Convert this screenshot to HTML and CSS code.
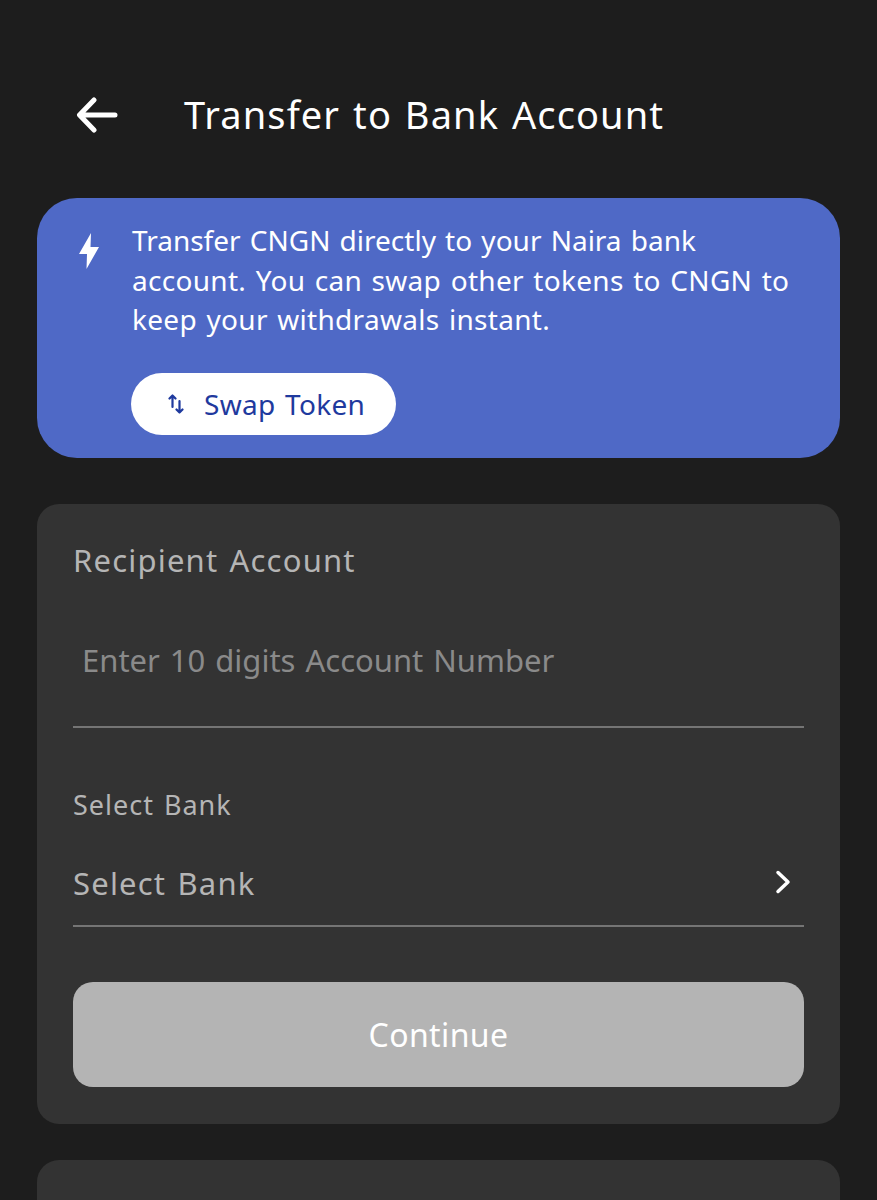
FILE: index.html
```html
<!DOCTYPE html>
<html lang="en">
<head>
    <meta charset="UTF-8">
    <meta name="viewport" content="width=device-width, initial-scale=1.0">
    <title>Transfer to Bank Account</title>
    <link rel="stylesheet" href="styles.css">
</head>
<body>
    <header class="topbar">
        <svg class="back-icon" width="42" height="36" viewBox="0 0 42 36" fill="none" stroke="#fff" stroke-width="5" stroke-linecap="round" stroke-linejoin="round">
            <path d="M39 18H4M18 3 3.500 18 18 33"/>
        </svg>
        <h1>Transfer to Bank Account</h1>
    </header>

    <section class="notice">
        <svg class="bolt-icon" width="22" height="36" viewBox="0 0 22 36" fill="#fff">
            <path d="M13 0 1 21H9L8.500 36 21 14H12.500Z"/>
        </svg>
        <div class="notice-body">
            <p><span class="tight-line">Transfer CNGN directly to your Naira bank</span><br>account. You can swap other tokens to CNGN to<br>keep your withdrawals instant.</p>
            <a class="swap-btn" href="#swap">
                <svg width="16" height="20" viewBox="0 0 16 20" fill="none" stroke="#1f3a9e" stroke-width="2.200" stroke-linecap="round" stroke-linejoin="round">
                    <path d="M4.500 13V1.500M1.500 4.500 4.500 1.500 7.500 4.500M11.500 7V18.500M8.500 15.500 11.500 18.500 14.500 15.500"/>
                </svg>
                <span>Swap Token</span>
            </a>
        </div>
    </section>

    <form class="card">
        <h2>Recipient Account</h2>
        <div class="field account-field">Enter 10 digits Account Number</div>
        <label class="small-label">Select Bank</label>
        <div class="field bank-field">
            <span>Select Bank</span>
            <svg width="18" height="24" viewBox="0 0 18 24" fill="none" stroke="#fff" stroke-width="3.500" stroke-linecap="round" stroke-linejoin="round">
                <path d="M4 2.500 14 12 4 21.500"/>
            </svg>
        </div>
        <button class="continue" type="button">Continue</button>
    </form>

    <div class="card next-card"></div>
</body>
</html>
```

FILE: styles.css
```css
html, body {
    height: 100%;
    overflow: hidden;
}
body {
    margin: 0;
    padding: 0 37px;
    background: #1d1d1d;
    color: #fff;
    font-family: "Noto Sans", sans-serif;
    word-spacing: 0.12em;
}
.topbar {
    display: flex;
    align-items: center;
    height: 198px;
    padding: 31px 0 0 39px;
    box-sizing: border-box;
}
.back-icon {
    flex: none;
}
h1 {
    margin: 0 0 2px 66px;
    font-size: 38px;
    font-weight: 400;
    letter-spacing: 1.1px;
}
.notice {
    display: flex;
    height: 260px;
    box-sizing: border-box;
    padding: 35px 0 0 41px;
    background: #4f69c6;
    border-radius: 40px;
}
.bolt-icon {
    flex: none;
}
.notice-body {
    margin-left: 31px;
}
.notice p {
    margin: -12px 0 0;
    padding-left: 1px;
    font-size: 28px;
    line-height: 39.500px;
    letter-spacing: 0.3px;
}
.tight-line {
    letter-spacing: 0;
}
.swap-btn {
    display: inline-flex;
    align-items: center;
    gap: 20px;
    height: 62px;
    margin-top: 33px;
    padding: 0 31px 0 37px;
    background: #fff;
    border-radius: 31px;
    color: #1f3a9e;
    font-size: 28px;
    letter-spacing: 0.3px;
    text-decoration: none;
}
.card {
    display: block;
    margin-top: 46px;
    padding: 34px 36px 36px;
    box-sizing: border-box;
    height: 620px;
    background: #333;
    border-radius: 22px;
}
.card h2 {
    margin: 0;
    color: #b5b5b5;
    font-size: 31px;
    font-weight: 400;
    line-height: 44px;
    letter-spacing: 1.2px;
}
.field {
    border-bottom: 2px solid #757575;
    box-sizing: border-box;
}
.account-field {
    height: 126px;
    margin-top: 20px;
    padding: 0 0 0 9px;
    color: #8a8a8a;
    font-size: 31px;
    line-height: 116px;
}
.small-label {
    display: block;
    margin-top: 59px;
    color: #b5b5b5;
    font-size: 27px;
    line-height: 36px;
    letter-spacing: 1px;
}
.bank-field {
    display: flex;
    align-items: center;
    justify-content: space-between;
    height: 104px;
    padding: 18px 12px 0 0;
    color: #b5b5b5;
    font-size: 31px;
    letter-spacing: 1.2px;
}
.bank-field svg {
    margin-top: -2px;
}
.continue {
    display: block;
    width: 100%;
    height: 105px;
    margin-top: 55px;
    border: 0;
    border-radius: 20px;
    background: #b4b4b4;
    color: #fff;
    font-family: inherit;
    font-size: 32px;
    letter-spacing: 0.4px;
}
.next-card {
    margin-top: 36px;
    height: 300px;
}
```
